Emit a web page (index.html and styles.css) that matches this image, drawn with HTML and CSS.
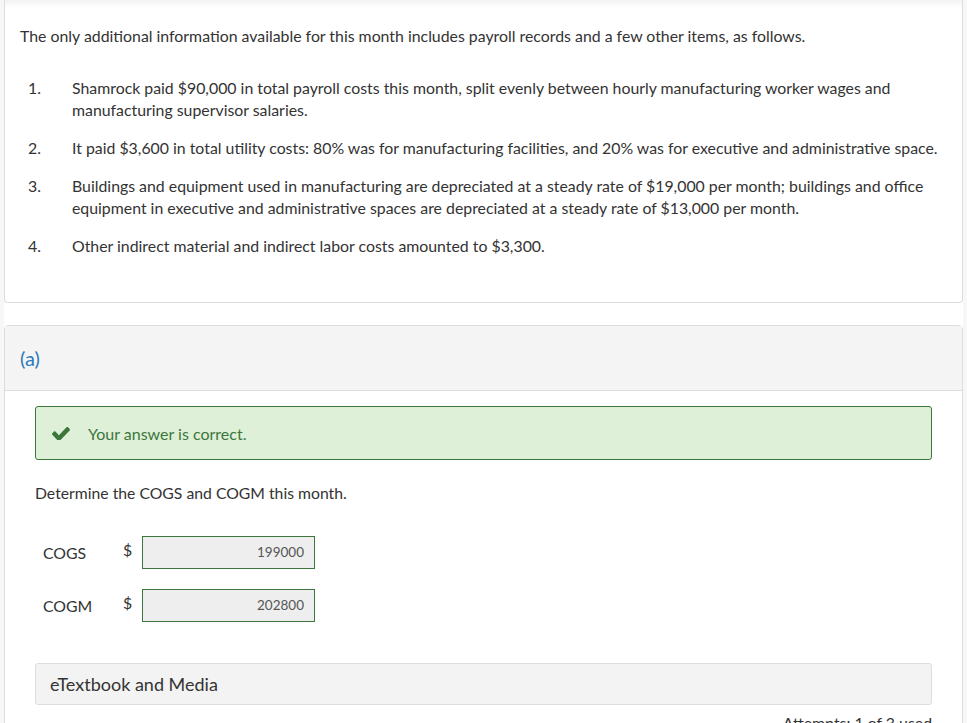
FILE: index.html
```html
<!DOCTYPE html>
<html lang="en">
<head>
  <meta charset="UTF-8">
  <meta name="viewport" content="width=device-width, initial-scale=1.0">
  <title>Question</title>
  <link rel="stylesheet" href="styles.css">
</head>
<body>
  <div class="page">
    <section class="card intro">
      <p>The only additional information available for this month includes payroll records and a few other items, as follows.</p>
      <ol class="items">
        <li><span class="num">1.</span><span>Shamrock paid $90,000 in total payroll costs this month, split evenly between hourly manufacturing worker wages and manufacturing supervisor salaries.</span></li>
        <li><span class="num">2.</span><span>It paid $3,600 in total utility costs: 80% was for manufacturing facilities, and 20% was for executive and administrative space.</span></li>
        <li><span class="num">3.</span><span>Buildings and equipment used in manufacturing are depreciated at a steady rate of $19,000 per month; buildings and office equipment in executive and administrative spaces are depreciated at a steady rate of $13,000 per month.</span></li>
        <li><span class="num">4.</span><span>Other indirect material and indirect labor costs amounted to $3,300.</span></li>
      </ol>
    </section>

    <section class="card part">
      <div class="part-head">(a)</div>
      <div class="part-body">
        <div class="alert">
          <svg class="check" viewBox="121 338 1550 1088" width="18" height="13" preserveAspectRatio="none">
            <path d="M1671 566q0 40-28 68l-724 724-136 136q-28 28-68 28t-68-28l-136-136-362-362q-28-28-28-68t28-68l136-136q28-28 68-28t68 28l294 295 656-657q28-28 68-28t68 28l136 136q28 28 28 68z" fill="#3c763d"/>
          </svg>
          <span>Your answer is correct.</span>
        </div>

        <p class="prompt">Determine the COGS and COGM this month.</p>

        <div class="answer-row">
          <span class="label">COGS</span>
          <span class="cur">$</span>
          <span class="field">199000</span>
        </div>
        <div class="answer-row">
          <span class="label">COGM</span>
          <span class="cur">$</span>
          <span class="field">202800</span>
        </div>

        <div class="media">eTextbook and Media</div>
        <div class="attempts">Attempts: 1 of 3 used</div>
      </div>
    </section>
  </div>
</body>
</html>
```

FILE: styles.css
```css
body {
  margin: 0;
  background: #f7f7f7;
  font-family: Lato, 'Open Sans', sans-serif;
  color: #333;
}
.page {
  margin: 0 4px;
  background: #fff;
  padding-bottom: 40px;
}
.card {
  border: 1px solid #ddd;
  border-radius: 4px;
  background: #fff;
}
.intro {
  margin-top: -6px;
  border-top: none;
  padding: 31px 15px 45px 15px;
  background: linear-gradient(#e9e9e9, #fff 14px);
  border-radius: 0 0 4px 4px;
}
.intro p {
  margin: 0;
  font-size: 15.85px;
  line-height: 22px;
}
.items {
  list-style: none;
  margin: 30px 0 0 0;
  padding: 0 0 0 8px;
  font-size: 15.85px;
  line-height: 22px;
}
.items li {
  display: flex;
  margin-bottom: 16px;
}
.items li:last-child {
  margin-bottom: 0;
}
.items .num {
  flex: 0 0 44px;
}
.part {
  margin-top: 22px;
}
.part-head {
  background: #f4f4f4;
  border-bottom: 1px solid #ddd;
  color: #2a7ab9;
  font-size: 20px;
  padding: 20px 15px 19px 15px;
  line-height: 25px;
}
.part-body {
  padding: 15px 30px 40px 30px;
}
.alert {
  display: flex;
  align-items: center;
  height: 52px;
  background: #dff0d8;
  border: 1px solid #3c763d;
  border-radius: 3px;
  color: #3c763d;
  font-size: 16px;
  padding-left: 16px;
}
.check {
  margin-right: 18px;
}
.prompt {
  margin: 23px 0 0 0;
  font-size: 15.75px;
  line-height: 20px;
}
.answer-row {
  display: flex;
  align-items: center;
  margin-top: 33px;
  padding-left: 8px;
  font-size: 15.85px;
}
.answer-row + .answer-row {
  margin-top: 20px;
}
.label {
  width: 80px;
}
.cur {
  width: 19px;
  position: relative;
  top: -3px;
}
.field {
  box-sizing: border-box;
  width: 173px;
  height: 33px;
  line-height: 31px;
  background: #eee;
  border: 1px solid #3c763d;
  text-align: right;
  padding-right: 10px;
  font-size: 13.5px;
  color: #555;
}
.media {
  margin-top: 41px;
  background: #f3f3f3;
  border: 1px solid #ddd;
  border-radius: 3px;
  font-size: 18px;
  padding: 0 14px;
  height: 40px;
  line-height: 40px;
}
.attempts {
  text-align: right;
  font-size: 15.85px;
  margin-top: 8px;
}
```
